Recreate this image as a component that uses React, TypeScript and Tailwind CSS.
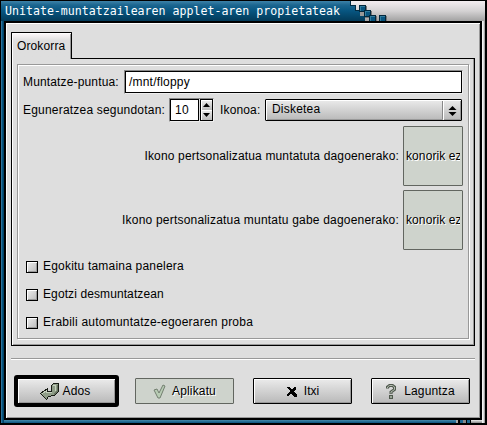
import React from "react";

const raised =
  "border border-black rounded-[1px] bg-linear-to-b from-[#ebebeb] to-[#b9b9b9] shadow-[inset_1px_1px_0_#fff,inset_-1px_-1px_0_#999]";

function Check({ label, spacing }: { label: string; spacing: string }) {
  return (
    <label className="flex h-7 items-center">
      <span className="mr-[5px] h-3 w-3 border border-black bg-linear-to-br from-[#eee] to-[#bbb] shadow-[inset_1px_1px_0_#fff,inset_-1px_-1px_0_#999]" />
      <span className={"-mt-0.5 " + spacing}>{label}</span>
    </label>
  );
}

function IconRow({ label, spacing }: { label: string; spacing: string }) {
  return (
    <div className="flex items-center justify-end">
      <span className={"mr-1 whitespace-nowrap " + spacing}>{label}</span>
      <div className="flex h-[60px] w-[60px] items-center justify-center overflow-hidden rounded-[1px] border border-[#626660] bg-[#ced3cc]">
        <div className="flex w-[54px] overflow-hidden [text-shadow:1px_1px_0_#fff]">
          <span className="whitespace-nowrap tracking-[0.1px]">konorik ez</span>
        </div>
      </div>
    </div>
  );
}

function OkIcon() {
  return (
    <svg width="20" height="19" viewBox="0 0 20 19" shapeRendering="crispEdges" className="mr-[3px]">
      <path d="M11.500 3.500L13.500 1.500H18.500V9.500L14.500 13.500L8.500 14.500L6.500 17.500L.500 11.500L7.500 6.500V9.500L11.500 9.500z" fill="#8f9d88" stroke="#171b15" />
      <path d="M12.500 3.500h3v5M2.500 11.500l4-3v2h5" fill="none" stroke="#c4d0bd" />
      <path d="M17.500 3v6l-3.500 3.500" fill="none" stroke="#66725f" />
    </svg>
  );
}

function ApplyIcon() {
  return (
    <svg width="13" height="15" viewBox="0 0 13 15" className="mr-[6px]">
      <path d="M1 6l3-1 2 4 4-8 2 1-5 12H5z" fill="#b8ccb4" stroke="#737f70" />
    </svg>
  );
}

function CloseIcon() {
  return (
    <svg width="10" height="11" viewBox="0 0 10 11" shapeRendering="crispEdges" className="mr-[7px]">
      <path d="M0 1h3l2 3 2-3h2v2L7 5l3 4v2H7L4 7l-2 3H0V8l3-3-3-3z" fill="#000" />
    </svg>
  );
}

function HelpIcon() {
  return (
    <svg width="10" height="15" viewBox="0 0 10 15" className="mr-[8px]">
      <path d="M1.500 4.500V3l2-1.500h3L8.500 3v2.500L5 8v2" fill="none" stroke="#50594e" strokeWidth="3" />
      <path d="M1.500 4V3l2-1.500h3L8.500 3v2.500L5 8v1.500" fill="none" stroke="#b4bdb1" />
      <rect x="3.500" y="11.500" width="3" height="3" fill="#9aa596" stroke="#50594e" />
    </svg>
  );
}

function TitleArt() {
  return (
    <svg width="484" height="20" className="absolute inset-0" shapeRendering="crispEdges">
      <defs>
        <linearGradient id="blue" x1="0" y1="0" x2="0" y2="1">
          <stop offset="0" stopColor="#3d82a8" />
          <stop offset="0.2" stopColor="#1c6690" />
          <stop offset="0.5" stopColor="#075580" />
          <stop offset="1" stopColor="#033a58" />
        </linearGradient>
      </defs>
      <path d="M0 0H349V4H354V9H359V14H364V20H0z" fill="url(#blue)" />
      <path d="M349.500 0V4.500H354.500V9.500H359" fill="none" stroke="#022b42" />
      {[[358, 4], [363, 9], [368, 14], [378, 14]].map(([x, y]) => (
        <g key={x}>
          <rect x={x + 1} y={y + 1} width="7" height="7" fill="#777" />
          <rect x={x} y={y} width="7" height="7" fill="#02283d" />
          <rect x={x + 1} y={y + 1} width="5" height="5" fill="#317c9e" />
          <rect x={x + 2} y={y + 2} width="4" height="4" fill="#075580" />
        </g>
      ))}
      <rect x="359" y="11" width="4" height="4" fill="#999" />
    </svg>
  );
}

export default function App() {
  return (
    <div className="flex h-[425px] w-[487px] flex-col overflow-hidden bg-black pt-px font-['Liberation_Sans',Arial,sans-serif] text-[12px] leading-[15px] text-black">
      <header className="relative ml-px h-5 w-[484px] shrink-0 overflow-hidden bg-linear-to-b from-[#f3edf0] via-[#d4d2d3] to-[#a2a2a2]">
        <TitleArt />
        <h1 className="relative ml-[4px] whitespace-pre pt-[2px] font-['DejaVu_Sans_Mono',monospace] text-[11.6px] leading-[16px] text-white">Unitate-muntatzailearen applet-aren propietateak</h1>
      </header>

      <div className="ml-px flex h-[402px] w-[484px] shrink-0 bg-linear-to-r from-[#3d82a8] via-[#075580] to-[#033a58] bg-[length:3px_100%] bg-no-repeat">
        <div className="ml-[3px] flex h-[402px] w-[478px] flex-col bg-black pt-[2px]">
          <main className="ml-[2px] flex h-[395px] w-[474px] shrink-0 flex-col bg-[#dedede] shadow-[inset_1px_1px_0_#fff,inset_-1px_-1px_0_#999]">
            <div className="ml-[5px] mt-[9px] flex h-[27px] w-[464px] shrink-0 items-end">
              <div className="z-10 h-[27px] w-[61px] rounded-t-[1px] border-x border-t border-black bg-linear-to-b from-[#fffafc] to-[#dedede] to-30% pl-[5px] pt-[6px] tracking-[0.12px] shadow-[inset_1px_1px_0_#fff,inset_-1px_0_0_#999]">Orokorra</div>
              <div className="h-px grow bg-black" />
            </div>
            <section className="ml-[5px] h-[287px] w-[464px] shrink-0 border-x border-b border-black pl-[5px] pt-[5px] shadow-[inset_1px_0_0_#fff,inset_-1px_-1px_0_#999]">
              <div className="h-[275px] w-[452px] border border-[#999] pl-[5px] pt-[5px] shadow-[inset_1px_1px_0_#fff,1px_1px_0_#fff]">
                <div className="flex h-[24px] items-center">
                  <span className="w-[101px] whitespace-nowrap tracking-[0.15px]">Muntatze-puntua:</span>
                  <div className="h-[24px] w-[339px] border border-t-[#888] border-l-[#888] border-r-[#eee] border-b-[#eee]">
                    <div className="h-[22px] border border-black bg-white pl-[3px] pt-[3px] tracking-[0.2px]">/mnt/floppy</div>
                  </div>
                </div>
                <div className="mt-1 flex h-[24px] items-center">
                  <span className="w-[146px] whitespace-nowrap tracking-[0.2px]">Eguneratzea segundotan:</span>
                  <div className="flex h-[24px] w-[45px] border border-t-[#888] border-l-[#888] border-r-[#eee] border-b-[#eee]">
                    <div className="h-[22px] w-[29px] border border-black bg-white pl-[4px] pt-[3px] tracking-[0.3px]">10</div>
                    <div className="ml-px flex h-[22px] w-[13px] flex-col border border-black bg-[#ddd]">
                      {["M2 7h7L5.500 3z", "M2 3h7L5.500 7z"].map((d) => (
                        <div key={d} className="h-[10px] bg-linear-to-b from-[#eee] to-[#bbb] shadow-[inset_1px_1px_0_#fff]">
                          <svg width="11" height="10"><path d={d} /></svg>
                        </div>
                      ))}
                    </div>
                  </div>
                  <span className="ml-[6px] w-[45px] tracking-[0.15px]">Ikonoa:</span>
                  <div className={"flex h-[22px] w-[197px] " + raised}>
                    <span className="grow pl-[6px] pt-[2px] tracking-[0.2px]">Disketea</span>
                    <span className="my-px w-px bg-[#888]" />
                    <span className="flex w-[18px] items-center justify-center border-l border-white">
                      <svg width="9" height="11"><path d="M.500 5h8L4.500 1zM.500 7h8L4.500 11z" /></svg>
                    </span>
                  </div>
                </div>
                <div className="mt-[4px] flex w-[440px] flex-col gap-1">
                  <IconRow label="Ikono pertsonalizatua muntatuta dagoenerako:" spacing="tracking-[0.16px]" />
                  <IconRow label="Ikono pertsonalizatua muntatu gabe dagoenerako:" spacing="tracking-[0.2px]" />
                </div>
                <div className="ml-[3px] mt-[3px]">
                  <Check label="Egokitu tamaina panelera" spacing="tracking-[0.2px]" />
                  <Check label="Egotzi desmuntatzean" spacing="tracking-[0.1px]" />
                  <Check label="Erabili automuntatze-egoeraren proba" spacing="tracking-[0.22px]" />
                </div>
              </div>
            </section>
            <div className="ml-[5px] mt-[12px] h-[2px] w-[464px] shrink-0 border-t border-[#999] bg-white" />
            <footer className="ml-[8px] mt-[15px] flex h-[32px] shrink-0 items-center">
              <button className="h-[32px] w-[105px] rounded-[3px] bg-black p-[3px]">
                <span className="flex h-[26px] items-center justify-center rounded-[1px] border border-black bg-linear-to-b from-[#ebebeb] to-[#b9b9b9] pr-[3px] shadow-[inset_1px_1px_0_#fff,inset_-1px_-1px_0_#999]">
                  <OkIcon />
                  <span className="tracking-[0.1px]">Ados</span>
                </span>
              </button>
              <button className="ml-[16px] flex h-[26px] w-[99px] items-center justify-center rounded-[1px] border border-[#626660] bg-[#ced3cc] [text-shadow:1px_1px_0_#fff]">
                <ApplyIcon /><span className="tracking-[0.15px]">Aplikatu</span>
              </button>
              <button className={"ml-[19px] flex h-[26px] w-[99px] items-center justify-center " + raised}>
                <CloseIcon /><span className="-mr-px">Itxi</span>
              </button>
              <button className={"ml-[19px] flex h-[26px] w-[99px] items-center justify-center " + raised}>
                <HelpIcon /><span className="tracking-[0.15px]">Laguntza</span>
              </button>
            </footer>
          </main>
          <div className="mt-[2px] flex h-[3px] shrink-0">
            <div className="h-[3px] w-[452px] bg-linear-to-b from-[#4389a9] to-[#075580]" />
            <div className="w-[2px] bg-[#aaa]" />
            <div className="w-[2px] bg-black" />
            <div className="w-[3px] bg-[#1c6690]" />
            <div className="w-[3px] bg-[#888]" />
            <div className="w-px bg-black" />
            <div className="w-[3px] bg-[#1c6690]" />
            <div className="w-px bg-black" />
            <div className="grow bg-linear-to-b from-[#eee] to-[#888]" />
          </div>
        </div>
        <div className="h-[402px] w-[3px] bg-linear-to-r from-white via-[#ddd] to-[#888]" />
      </div>
    </div>
  );
}
